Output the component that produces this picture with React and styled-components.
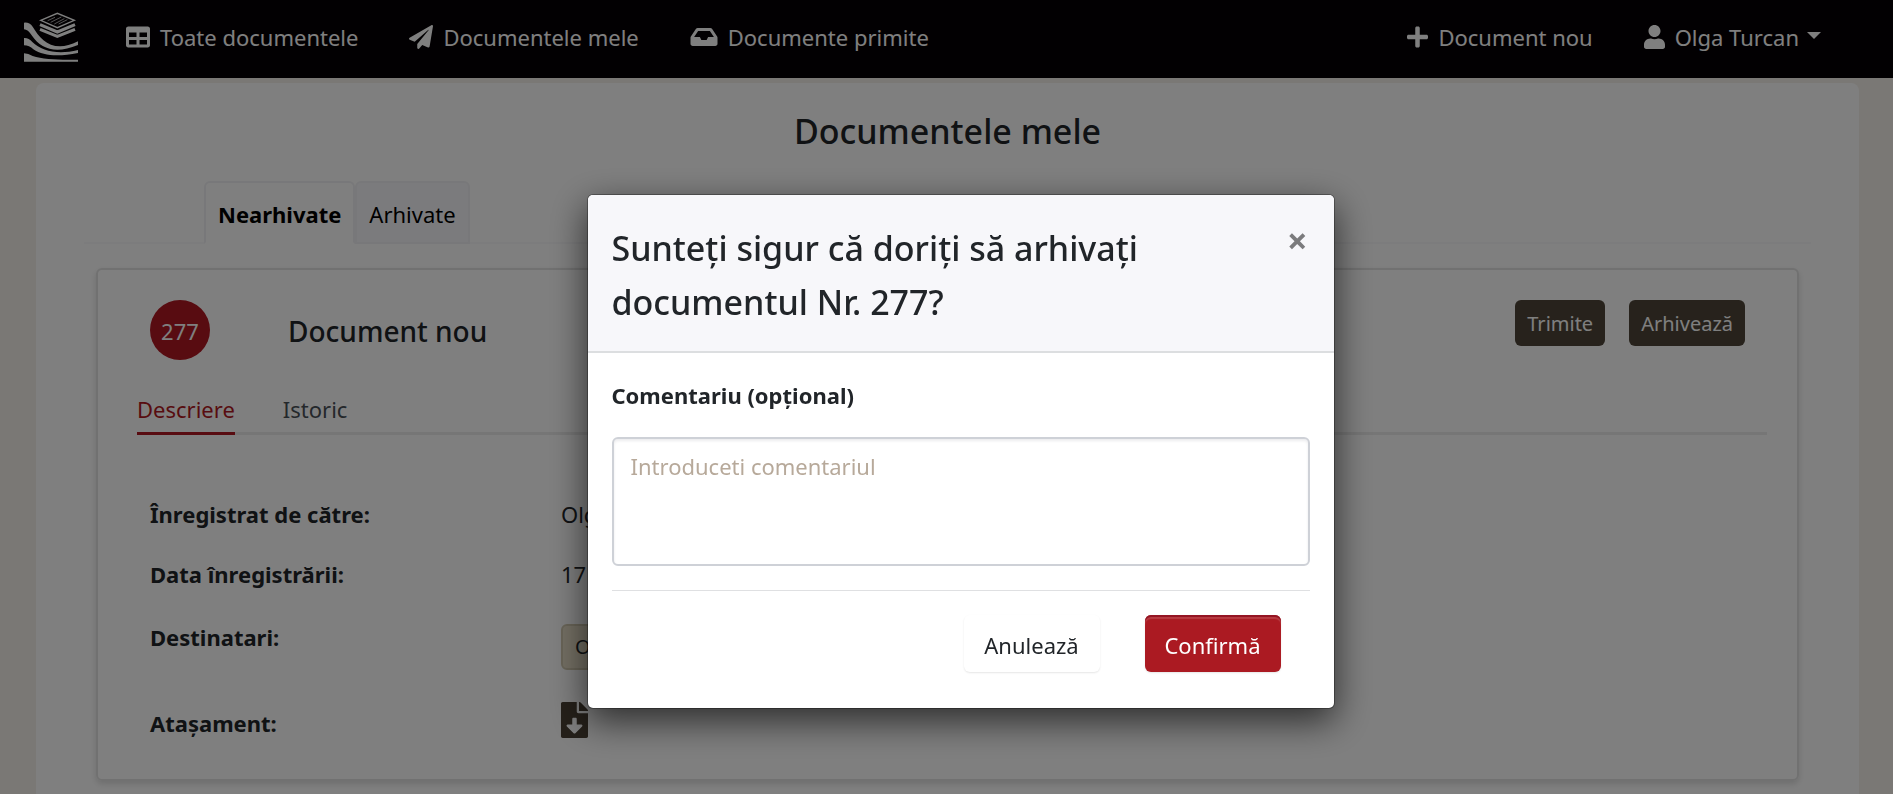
import React from 'react';
import styled, { createGlobalStyle } from 'styled-components';
import { FaTable, FaPaperPlane, FaInbox, FaPlus, FaUser, FaFileDownload } from 'react-icons/fa';

const GlobalStyle = createGlobalStyle`
  *, *::before, *::after { box-sizing: border-box; }
  body {
    margin: 0;
    overflow: hidden;
    background: #f4f1ea;
    color: #212529;
    font-family: "Noto Sans", "Open Sans", sans-serif;
    font-size: 22px;
    line-height: 36px;
  }
  button, textarea { font: inherit; }
`;

const Page = styled.div`
  height: 100vh;
  overflow: hidden;
`;

const Navbar = styled.nav`
  display: flex;
  align-items: center;
  gap: 51px;
  height: 78px;
  padding: 0 72px 4px 24px;
  background: #050004;
`;

const Brand = styled.a`
  display: flex;
  margin-right: -3px;
  svg { width: 54px; height: 50px; display: block; }
`;

const NavLink = styled.a`
  display: flex;
  align-items: center;
  gap: 10px;
  margin-left: ${(p) => (p.$push ? 'auto' : '0')};
  color: #fff;
  text-decoration: none;
  white-space: nowrap;
  svg { flex: none; font-size: 24px; }
`;

const Wide = styled(FaInbox)`
  width: 28px;
`;

const Narrow = styled.span`
  display: flex;
  svg { width: 21px; }
`;

const Caret = styled.span`
  border-top: 7px solid #fff;
  border-left: 7px solid transparent;
  border-right: 7px solid transparent;
  margin: 0 0 4px -2px;
`;

const Main = styled.main`
  min-height: 100vh;
  margin: 5px 34px 0 36px;
  padding: 27px 48px;
  border-radius: 8px;
  background: #fff;
`;

const PageTitle = styled.h1`
  margin: 0 0 29px;
  font-size: 34px;
  line-height: 42px;
  font-weight: 500;
  text-align: center;
`;

const Tabs = styled.div`
  display: flex;
  padding-left: 120px;
  border-bottom: 2px solid #f8f8fa;
`;

const Tab = styled.button`
  height: 63px;
  margin-bottom: -2px;
  padding: 2px 12px 0;
  border: 2px solid #f1f1f4;
  border-bottom-color: ${(p) => (p.$active ? '#fff' : '#f1f1f4')};
  border-radius: 6px 6px 0 0;
  background: ${(p) => (p.$active ? '#fff' : '#f7f7fa')};
  color: #000;
  font-weight: ${(p) => (p.$active ? 700 : 400)};
`;

const Card = styled.section`
  margin: 24px 12px 0;
  padding: 30px 30px 38px 39px;
  border: 2px solid #e2e2e2;
  border-radius: 6px;
  box-shadow: 0 3px 6px rgba(0, 0, 0, 0.14);
`;

const CardHeader = styled.header`
  display: flex;
  align-items: flex-start;
  gap: 24px;
  padding: 0 22px 0 13px;
`;

const NumberBadge = styled.span`
  width: 60px;
  height: 60px;
  margin-right: 54px;
  border-radius: 50%;
  background: #b01822;
  color: #fff;
  line-height: 62px;
  text-align: center;
`;

const CardTitle = styled.h2`
  flex: 1;
  margin: 0;
  font-size: 28px;
  line-height: 62px;
  font-weight: 500;
`;

const SmallButton = styled.button`
  height: 46px;
  padding: 2px 12px 0;
  border: 0;
  border-radius: 6px;
  background: #4e4538;
  color: #fff;
  font-size: 20px;
`;

const SubTabs = styled.div`
  display: flex;
  gap: 48px;
  margin-top: 32px;
  border-bottom: 3px solid #ececec;
`;

const SubTab = styled.button`
  margin-bottom: -3px;
  padding: 0 0 8px;
  border: 0;
  border-bottom: 3px solid ${(p) => (p.$active ? '#b01822' : 'transparent')};
  background: none;
  color: ${(p) => (p.$active ? '#b01822' : '#495057')};
  line-height: 30px;
`;

const Details = styled.dl`
  display: grid;
  grid-template-columns: 1fr 3fr;
  gap: 24px 9px;
  margin: 0;
  padding: 61px 0 0 13px;
`;

const Term = styled.dt`
  padding-top: ${(p) => (p.$drop ? '3px' : '0')};
  font-weight: 700;
`;

const Value = styled.dd`
  margin: 0;
  padding: ${(p) => (p.$tall ? '8px 0' : '0')};
`;

const Recipient = styled.span`
  display: inline-block;
  padding: 4px 12px;
  border: 2px solid #d2c9b0;
  border-radius: 6px;
  background: #e8dfc8;
  font-size: 20px;
  line-height: 34px;
`;

const Download = styled.a`
  display: flex;
  color: #4a4034;
  font-size: 36px;
  svg { width: 27px; }
`;

const Overlay = styled.div`
  position: fixed;
  inset: 0;
  display: flex;
  justify-content: center;
  align-items: flex-start;
  padding: 194px 0 0 28px;
  background: rgba(0, 0, 0, 0.5);
`;

const Dialog = styled.div`
  width: 748px;
  max-width: 100%;
  overflow: hidden;
  border: 1px solid rgba(0, 0, 0, 0.3);
  border-radius: 6px;
  background: #fff;
  background-clip: padding-box;
  box-shadow: 0 12px 36px rgba(0, 0, 0, 0.65);
`;

const DialogHeader = styled.header`
  display: flex;
  align-items: flex-start;
  justify-content: space-between;
  padding: 26px 24px 22px;
  border-bottom: 2px solid #dcdee0;
  background: #f7f7fa;
`;

const DialogTitle = styled.h2`
  margin: 0;
  font-size: 34px;
  line-height: 54px;
  font-weight: 500;
`;

const CloseButton = styled.button`
  margin-top: 2px;
  padding: 0 2px;
  border: 0;
  background: none;
  color: #7b7b7d;
  font-size: 36px;
  font-weight: 700;
`;

const DialogForm = styled.form`
  display: flex;
  flex-direction: column;
  padding: 24px 24px 36px;
`;

const Label = styled.label`
  margin-bottom: 24px;
  font-weight: 700;
`;

const Comment = styled.textarea`
  display: block;
  width: 100%;
  height: 129px;
  padding: 9px 17px;
  border: 2px solid #ced1d7;
  border-radius: 6px;
  box-shadow: inset 0 2px 3px rgba(0, 0, 40, 0.08);
  resize: none;
  &::placeholder { color: #b7a99a; opacity: 1; }
`;

const Actions = styled.div`
  display: flex;
  justify-content: flex-end;
  gap: 45px;
  margin-top: 24px;
  padding: 24px 29px 0 0;
  border-top: 1px solid #dfe0e2;
`;

const DialogButton = styled.button`
  height: 57px;
  min-width: 136px;
  padding: 3px 18px 0;
  border: 0;
  border-radius: 6px;
  background: ${(p) => (p.$primary ? '#ab1a22' : '#fff')};
  color: ${(p) => (p.$primary ? '#fff' : '#212529')};
  box-shadow: ${(p) =>
    p.$primary
      ? 'inset 0 2px 0 #941523, inset 0 4px 1px rgba(255, 255, 255, 0.15), 0 1px 2px rgba(0, 0, 0, 0.1)'
      : '0 1px 2px rgba(0, 0, 0, 0.1)'};
`;

function Logo() {
  return (
    <svg viewBox="72 34 162 150" role="img" aria-label="Logo">
      <g fill="#fff">
        <path d="M72 66Q88 64 98 78C122 118 160 160 234 122V133C170 160 124 148 95 104Q84 86 72 86Z" />
        <path d="M72 112Q86 111 97 124C125 152 175 163 234 148V157C175 169 130 166 100 146Q88 134 72 134Z" />
        <path d="M72 158Q85 158 98 166C130 177 180 178 234 177V183H72Z" />
      </g>
      <path d="M120 86L172 107L225 86M120 72L172 94L225 72" fill="none" stroke="#fff" strokeWidth="9" />
      <path d="M122 59L172 38L223 59L172 81Z" fill="#050004" stroke="#fff" strokeWidth="4" />
      <path d="M143 60L165 50M152 65L184 49M163 70L193 54M176 70L202 57" stroke="#fff" strokeWidth="2" />
    </svg>
  );
}

export default function App() {
  return (
    <>
      <GlobalStyle />
      <Page>
        <Navbar>
          <Brand href="#"><Logo /></Brand>
          <NavLink href="#toate"><FaTable />Toate documentele</NavLink>
          <NavLink href="#mele"><FaPaperPlane />Documentele mele</NavLink>
          <NavLink href="#primite"><Wide />Documente primite</NavLink>
          <NavLink href="#nou" $push><Narrow><FaPlus /></Narrow>Document nou</NavLink>
          <NavLink href="#cont"><Narrow><FaUser /></Narrow>Olga Turcan<Caret /></NavLink>
        </Navbar>
        <Main>
          <PageTitle>Documentele mele</PageTitle>
          <Tabs>
            <Tab $active>Nearhivate</Tab>
            <Tab>Arhivate</Tab>
          </Tabs>
          <Card>
            <CardHeader>
              <NumberBadge>277</NumberBadge>
              <CardTitle>Document nou</CardTitle>
              <SmallButton>Trimite</SmallButton>
              <SmallButton>Arhivează</SmallButton>
            </CardHeader>
            <SubTabs>
              <SubTab $active>Descriere</SubTab>
              <SubTab>Istoric</SubTab>
            </SubTabs>
            <Details>
              <Term>Înregistrat de către:</Term>
              <Value>Olga</Value>
              <Term>Data înregistrării:</Term>
              <Value>17</Value>
              <Term $drop>Destinatari:</Term>
              <Value $tall><Recipient>Olga</Recipient></Value>
              <Term $drop>Atașament:</Term>
              <Value><Download href="#atasament" aria-label="Descarcă"><FaFileDownload /></Download></Value>
            </Details>
          </Card>
        </Main>
      </Page>
      <Overlay>
        <Dialog role="dialog" aria-modal="true" aria-labelledby="dialog-title">
          <DialogHeader>
            <DialogTitle id="dialog-title">Sunteți sigur că doriți să arhivați documentul Nr. 277?</DialogTitle>
            <CloseButton aria-label="Închide">×</CloseButton>
          </DialogHeader>
          <DialogForm>
            <Label htmlFor="comentariu">Comentariu (opțional)</Label>
            <Comment id="comentariu" placeholder="Introduceti comentariul" />
            <Actions>
              <DialogButton type="button">Anulează</DialogButton>
              <DialogButton type="button" $primary>Confirmă</DialogButton>
            </Actions>
          </DialogForm>
        </Dialog>
      </Overlay>
    </>
  );
}
